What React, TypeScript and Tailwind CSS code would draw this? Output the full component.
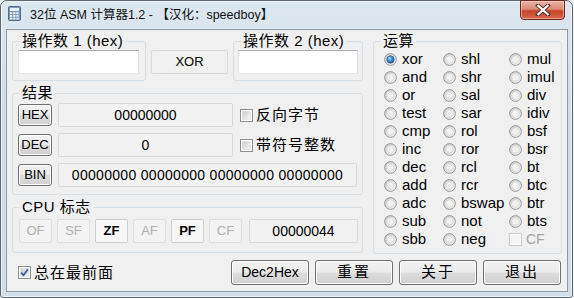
import React, { useId } from "react";

function useSafeId() {
  return useId().replace(/[^a-zA-Z0-9]/g, "");
}

function Radio({ checked }: { checked?: boolean }) {
  const id = useSafeId();
  return (
    <svg width="13" height="13" viewBox="0 0 13 13" className="shrink-0">
      <defs>
        <linearGradient id={id + "o"} x1="0" y1="0" x2="1" y2="1">
          <stop offset="0" stopColor="#c9c9c9" />
          <stop offset="1" stopColor="#f6f6f6" />
        </linearGradient>
        <radialGradient id={id + "d"} cx="0.4" cy="0.35" r="0.75">
          <stop offset="0" stopColor="#b6e2fa" />
          <stop offset="0.45" stopColor="#3f91d0" />
          <stop offset="1" stopColor="#174a8a" />
        </radialGradient>
      </defs>
      <circle cx="6.5" cy="6.5" r="5.9" fill={`url(#${id}o)`} stroke="#8e8f8f" strokeWidth="0.9" />
      <circle
        cx="6.5"
        cy="6.5"
        r="3.7"
        fill={checked ? `url(#${id}d)` : "#f1f1f1"}
        stroke={checked ? "#1d4d8c" : "#d2d2d2"}
        strokeWidth="0.6"
      />
    </svg>
  );
}

function Check({ checked, disabled }: { checked?: boolean; disabled?: boolean }) {
  const id = useSafeId();
  return (
    <svg width="13" height="13" viewBox="0 0 13 13" className="shrink-0">
      <defs>
        <linearGradient id={id + "g"} x1="0" y1="0" x2="1" y2="1">
          <stop offset="0" stopColor={disabled ? "#f4f4f4" : "#cbcbcb"} />
          <stop offset="1" stopColor={disabled ? "#f4f4f4" : "#f7f7f7"} />
        </linearGradient>
      </defs>
      <rect x="0.5" y="0.5" width="12" height="12" fill="#ffffff" stroke={disabled ? "#c9c9c9" : "#8e8f8f"} />
      <rect x="2.5" y="2.5" width="8" height="8" fill={`url(#${id}g)`} stroke={disabled ? "#f4f4f4" : "#dcdcdc"} strokeWidth="0.6" />
      {checked && (
        <path d="M3.2 6.6 L5.4 9.2 L9.9 3.4" fill="none" stroke="#3d5ea0" strokeWidth="1.8" strokeLinejoin="round" />
      )}
    </svg>
  );
}

function Group({
  label,
  className,
  children,
}: {
  label: string;
  className: string;
  children?: React.ReactNode;
}) {
  return (
    <div className={"relative border border-[#d5dfe5] rounded-[3px] " + className}>
      <span className="absolute -top-[10px] left-[7px] bg-[#f0f0f0] px-[2px] text-[15px] leading-[18px] whitespace-nowrap tracking-[0.5px]">
        {label}
      </span>
      {children}
    </div>
  );
}

const btn =
  "flex items-center justify-center border border-[#707070] rounded-[3px] bg-[linear-gradient(to_bottom,#f3f3f3_0%,#ebebeb_48%,#dddddd_52%,#d0d0d0_100%)] shadow-[inset_0_0_0_1px_#fcfcfc]";

const field =
  "flex items-center justify-center border border-[#d9d9d9] rounded-[2px] bg-[#f2f2f2] text-[14px]";

const ops: [string, string, string][] = [
  ["xor", "shl", "mul"],
  ["and", "shr", "imul"],
  ["or", "sal", "div"],
  ["test", "sar", "idiv"],
  ["cmp", "rol", "bsf"],
  ["inc", "ror", "bsr"],
  ["dec", "rcl", "bt"],
  ["add", "rcr", "btc"],
  ["adc", "bswap", "btr"],
  ["sub", "not", "bts"],
  ["sbb", "neg", ""],
];

function CalcIcon() {
  return (
    <svg width="13" height="15" viewBox="0 0 13 15" className="shrink-0">
      <rect x="0.5" y="0.5" width="12" height="14" rx="1" fill="#7f9bb8" stroke="#4f6a88" />
      <rect x="2" y="2" width="9" height="3" fill="#e8f2fb" />
      {[0, 1, 2].map((r) =>
        [0, 1, 2].map((c) => (
          <rect key={r + "-" + c} x={2 + c * 3.2} y={6.3 + r * 2.7} width="2.2" height="1.8" fill="#f4f8fc" />
        ))
      )}
    </svg>
  );
}

export default function App() {
  return (
    <div className="w-[574px] h-[298px] bg-[#eef1f4] overflow-hidden font-['Liberation_Sans','Noto_Sans_CJK_SC',sans-serif] text-black">
      <div className="w-[573px] h-[298px] rounded-t-[7px] rounded-b-[3px] border border-[#5d6673] bg-[linear-gradient(to_bottom,#dde7f0_0%,#d0dce8_40%,#d3dee9_100%)] flex flex-col pl-[5px] pr-[4px] shadow-[inset_0_0_0_1px_rgba(255,255,255,0.6)]">
        {/* title bar */}
        <div className="h-[28px] flex items-start shrink-0">
          <div className="mt-[5px] ml-[2px]">
            <CalcIcon />
          </div>
          <span className="ml-[9px] mt-[6px] text-[12.5px] leading-[16px] whitespace-nowrap text-[#111]">
            32位 ASM 计算器1.2 - 【汉化：speedboy】
          </span>
          <div className="ml-auto mr-[3px] -mt-[1px] w-[45px] h-[20px] rounded-b-[4px] border border-[#6e2a1f] bg-[linear-gradient(to_bottom,#eab4a6_0%,#dc8a76_45%,#c7452b_55%,#d5664c_100%)] flex items-center justify-center shadow-[inset_0_0_0_1px_rgba(255,220,210,0.5)]">
            <svg width="16" height="12" viewBox="0 0 16 12">
              <path d="M3 1.5 L13 10.5 M13 1.5 L3 10.5" stroke="#5a2a22" strokeWidth="4" strokeLinecap="square" />
              <path d="M3.3 1.8 L12.7 10.2 M12.7 1.8 L3.3 10.2" stroke="#ffffff" strokeWidth="2.2" strokeLinecap="square" />
            </svg>
          </div>
        </div>
        {/* client */}
        <div className="w-[562px] h-[263px] border border-[#8f9aa6] bg-[#f0f0f0] pt-[11px] pl-[5px] pr-[5px] flex flex-col">
          <div className="flex">
            {/* left column */}
            <div className="w-[351px] flex flex-col">
              <div className="flex h-[40px]">
                <Group label="操作数 1 (hex)" className="w-[134px] h-[40px] pt-[8px] pl-[5px]">
                  <div className="w-[121px] h-[24px] bg-white border border-[#abadb3] border-l-[#e2e3ea] border-r-[#dbdfe6] border-b-[#e3e9ef]" />
                </Group>
                <div className="ml-[5px] mt-[9px] w-[77px] h-[24px] flex items-center justify-center border border-[#d9d9d9] rounded-[2px] bg-[#f0f0f0] text-[13px]">
                  XOR
                </div>
                <Group label="操作数 2 (hex)" className="ml-[5px] w-[130px] h-[40px] pt-[8px] pl-[4px]">
                  <div className="w-[120px] h-[24px] bg-white border border-[#abadb3] border-l-[#e2e3ea] border-r-[#dbdfe6] border-b-[#e3e9ef]" />
                </Group>
              </div>
              <Group label="结果" className="mt-[12px] w-[351px] h-[102px] pt-[9px] pl-[5px] flex flex-col gap-[6px]">
                <div className="flex items-center h-[24px]">
                  <div className={btn + " w-[34px] h-[22px] text-[13px]"}>HEX</div>
                  <div className={field + " ml-[6px] w-[175px] h-[24px]"}>00000000</div>
                  <div className="ml-[7px]">
                    <Check />
                  </div>
                  <span className="ml-[3px] text-[15px] tracking-[1px] leading-[18px]">反向字节</span>
                </div>
                <div className="flex items-center h-[24px]">
                  <div className={btn + " w-[34px] h-[22px] text-[13px]"}>DEC</div>
                  <div className={field + " ml-[6px] w-[175px] h-[24px]"}>0</div>
                  <div className="ml-[7px]">
                    <Check />
                  </div>
                  <span className="ml-[3px] text-[15px] tracking-[1px] leading-[18px]">带符号整数</span>
                </div>
                <div className="flex items-center h-[24px]">
                  <div className={btn + " w-[34px] h-[22px] text-[13px]"}>BIN</div>
                  <div className={field + " ml-[6px] w-[299px] h-[24px] tracking-[0.3px]"}>
                    00000000 00000000 00000000 00000000
                  </div>
                </div>
              </Group>
              <Group label="CPU 标志" className="mt-[12px] w-[351px] h-[46px] pt-[11px] pl-[6px] flex">
                <div className="flex gap-[5px] h-[24px]">
                  {[
                    ["OF", false],
                    ["SF", false],
                    ["ZF", true],
                    ["AF", false],
                    ["PF", true],
                    ["CF", false],
                  ].map(([t, on]) => (
                    <div
                      key={t as string}
                      className={
                        "w-[33px] h-[24px] flex items-center justify-center rounded-[2px] border text-[13px] " +
                        (on
                          ? "border-[#cfcfcf] bg-[#f7f7f7] font-bold text-black"
                          : "border-[#dedede] bg-[#f3f3f3] text-[#b0b0b0]")
                      }
                    >
                      {t as string}
                    </div>
                  ))}
                </div>
                <div className={field + " ml-[7px] w-[109px] h-[24px]"}>00000044</div>
              </Group>
            </div>
            {/* ops */}
            <Group label="运算" className="ml-[10px] w-[190px] h-[213px] pt-[8px] pl-[10px]">
              <div className="flex flex-col">
                {ops.map((row, i) => (
                  <div key={i} className="flex h-[18px] items-center text-[15px] leading-[18px]">
                    {row.map((op, j) => (
                      <div
                        key={j}
                        className={"flex items-center gap-[5px] " + (j === 0 ? "w-[59px]" : j === 1 ? "w-[66px]" : "")}
                      >
                        {op === "" ? (
                          <>
                            <Check disabled />
                            <span className="text-[#a6a6a6] -ml-[1px] text-[14px]">CF</span>
                          </>
                        ) : (
                          <>
                            <Radio checked={op === "xor"} />
                            <span>{op}</span>
                          </>
                        )}
                      </div>
                    ))}
                  </div>
                ))}
              </div>
            </Group>
          </div>
          {/* bottom row */}
          <div className="mt-[6px] flex items-center h-[25px]">
            <div className="ml-[6px]">
              <Check checked />
            </div>
            <span className="ml-[3px] text-[15px] tracking-[1px] leading-[18px]">总在最前面</span>
            <div className="ml-auto flex gap-[6px] mr-[1px]">
              <div className={btn + " w-[78px] h-[25px] text-[14px]"}>Dec2Hex</div>
              <div className={btn + " w-[78px] h-[25px] text-[15px] tracking-[2px]"}>重置</div>
              <div className={btn + " w-[78px] h-[25px] text-[15px] tracking-[2px]"}>关于</div>
              <div className={btn + " w-[78px] h-[25px] text-[15px] tracking-[2px]"}>退出</div>
            </div>
          </div>
        </div>
      </div>
    </div>
  );
}
